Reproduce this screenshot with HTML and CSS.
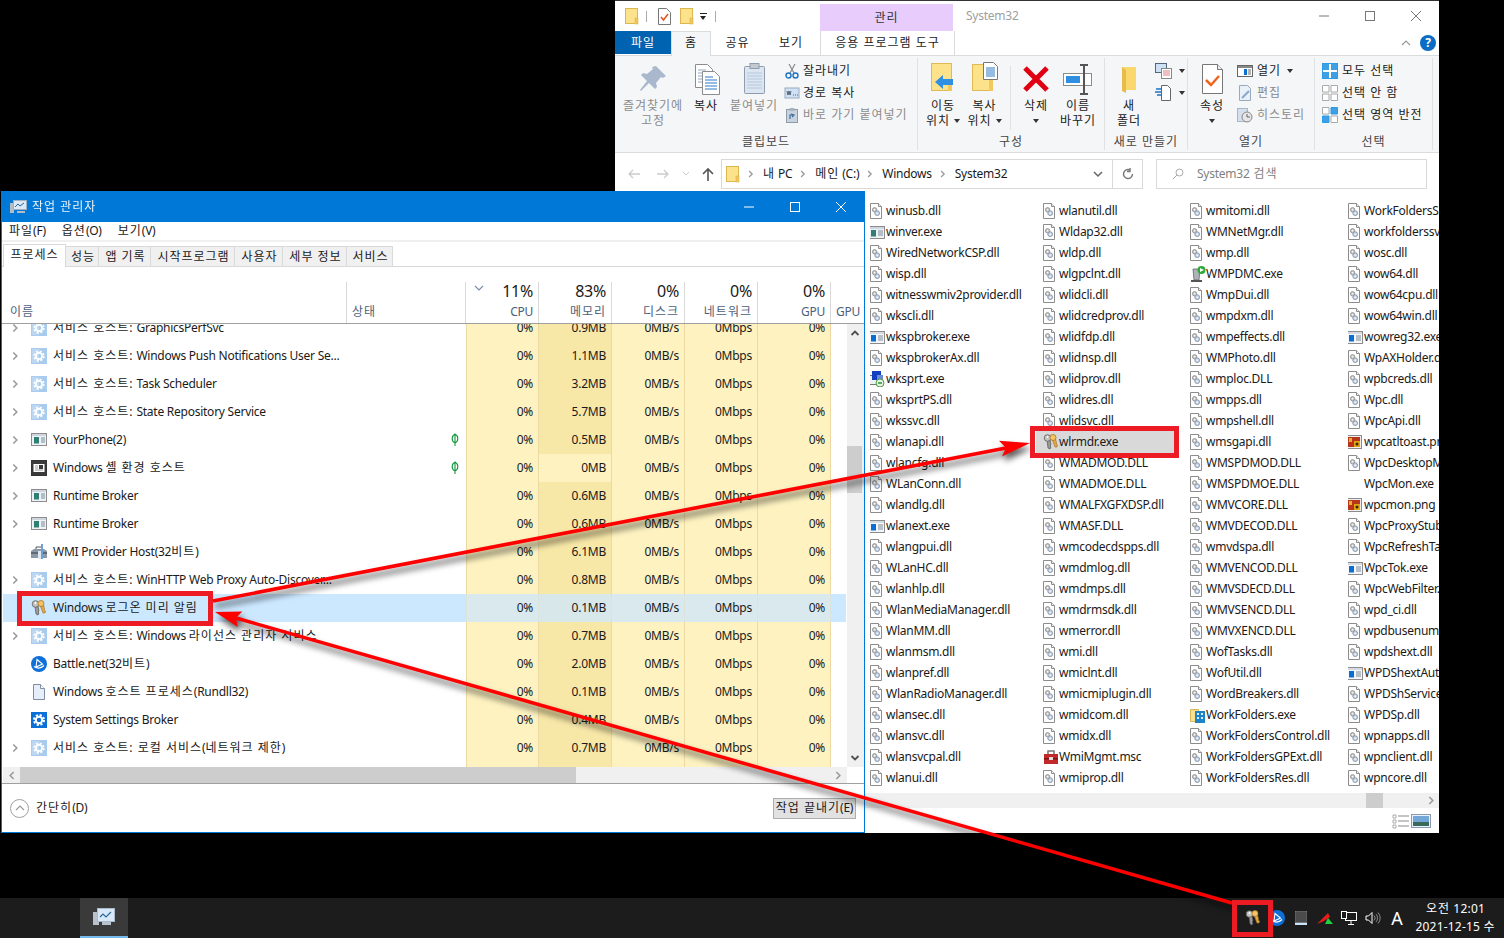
FILE: index.html
```html
<!DOCTYPE html>
<html lang="ko">
<head>
<meta charset="utf-8">
<title>작업 관리자</title>
<link rel="stylesheet" href="styles.css">
</head>
<body>
<svg class="defs" aria-hidden="true">
  <symbol id="dll" viewBox="0 0 16 16"><path d="M.5.5h8l3 3v12H.5z" fill="#fff" stroke="#8c8c8c"/><path d="M8.5.5v3h3" fill="#eee" stroke="#8c8c8c"/><circle cx="4.6" cy="6.8" r="2.2" fill="#c8c8c8" stroke="#8a8a8a" stroke-width=".8"/><circle cx="7.2" cy="10.2" r="2.4" fill="#c6d3e4" stroke="#7f8ea3" stroke-width=".8"/><circle cx="7.2" cy="10.2" r=".8" fill="#fff"/><circle cx="4.6" cy="6.8" r=".7" fill="#fff"/></symbol>
  <symbol id="win" viewBox="0 0 18 16"><rect x=".5" y="2.5" width="16" height="12" fill="#eef1f5" stroke="#8c8c8c"/><rect x="1" y="3" width="15" height="2" fill="#cfd6df"/><rect x="3" y="6" width="5" height="6.5" fill="#2f7f72"/><path d="M10 7h5M10 9h5M10 11h5" stroke="#7b8a9c"/></symbol>
  <symbol id="brk" viewBox="0 0 18 16"><rect x=".5" y="2.5" width="16" height="12" fill="#f4f6f9" stroke="#8c8c8c"/><rect x="1" y="3" width="15" height="2" fill="#d5dbe3"/><rect x="3" y="6" width="5" height="6.5" fill="#0a6fd0"/><path d="M10 7h5M10 9h5M10 11h5" stroke="#7b8a9c"/></symbol>
  <symbol id="rt" viewBox="0 0 18 16"><rect x=".5" y="4.5" width="12" height="9" fill="#eef1f5" stroke="#777"/><rect x="4" y="0" width="9" height="9" fill="#1040c0"/><rect x="9" y="4" width="6" height="5" fill="#6a8ad8"/><circle cx="12" cy="12" r="4" fill="#e8f2e4" stroke="#4f9a3f"/><path d="M10 12h4" stroke="#1f8a2f" stroke-width="1.4"/></symbol>
  <symbol id="key" viewBox="0 0 16 16"><path d="M4 6l1 8 2 1 1-2-1-1 1-1-1-5z" fill="#9a9a9a" stroke="#555" stroke-width=".7"/><circle cx="4.5" cy="4" r="3.3" fill="#c4c4c4" stroke="#5b5b5b" stroke-width=".8"/><path d="M9 5l3 8 2 0 .5-2-1.500-1 .5-1-1-4z" fill="#e6a93f" stroke="#a8752a" stroke-width=".7"/><circle cx="10" cy="3.500" r="3" fill="#f4c566" stroke="#a8752a" stroke-width=".8"/><circle cx="4.500" cy="3" r=".9" fill="#fff"/></symbol>
  <symbol id="gear" viewBox="0 0 16 16"><rect width="16" height="16" fill="#a9cbee"/><rect x="1" y="1" width="7" height="14" fill="#bcd7f2"/><circle cx="8" cy="8" r="4.800" fill="none" stroke="#fff" stroke-width="1.700" stroke-dasharray="2.100 1.670"/><circle cx="8" cy="8" r="3.100" fill="none" stroke="#fff" stroke-width="1.700"/></symbol>
  <symbol id="gearb" viewBox="0 0 16 16"><rect width="16" height="16" fill="#0a6fd6"/><circle cx="8" cy="8" r="5" fill="none" stroke="#fff" stroke-width="2" stroke-dasharray="2.200 1.730"/><circle cx="8" cy="8" r="3.200" fill="none" stroke="#fff" stroke-width="2"/></symbol>
  <symbol id="phone" viewBox="0 0 16 16"><rect x=".5" y="1.500" width="15" height="12" fill="#eef1f5" stroke="#8c8c8c"/><rect x="1" y="2" width="14" height="2" fill="#cfd6df"/><rect x="3" y="5" width="5" height="6.500" fill="#2f7f72"/><path d="M10 6h4M10 8h4M10 10h4" stroke="#7b8a9c"/></symbol>
  <symbol id="shell" viewBox="0 0 16 16"><rect x=".5" y=".5" width="15" height="15" fill="#3a3a3a" stroke="#333"/><rect x="2.500" y="4" width="11" height="8" fill="#fff"/><rect x="8" y="5" width="4" height="4" fill="#3a3a3a"/><path d="M4 6h3M4 8h3M4 10h8" stroke="#999"/></symbol>
  <symbol id="wmi" viewBox="0 0 16 16"><path d="M0 7l3-2h10l3 2v7H0z" fill="#8d98a6"/><rect x="0" y="8" width="16" height="2" fill="#5f6976"/><path d="M5 5V3h6v2" fill="none" stroke="#4c5663"/><rect x="10" y="0" width="2" height="15" fill="#6aa2d8"/><rect x="7" y="7" width="3" height="8" fill="#dfe7ef"/></symbol>
  <symbol id="bnet" viewBox="0 0 16 16"><circle cx="8" cy="8" r="8" fill="#0f6fd8"/><path d="M6 3.500l5.500 4.500-6.500 3 1 -7.500zM3 10.500c3 2 7 2 10-1" fill="none" stroke="#fff" stroke-width="1.100"/></symbol>
  <symbol id="page" viewBox="0 0 16 16"><path d="M2.500.5h7l4 4v11h-11z" fill="#e6eef9" stroke="#7f8ea3"/><path d="M9.500.5v4h4" fill="#fff" stroke="#7f8ea3"/></symbol>
  <symbol id="png" viewBox="0 0 18 16"><rect x=".5" y="1.500" width="15" height="13" fill="#eee" stroke="#8c8c8c"/><rect x="2" y="3" width="12" height="10" fill="#b8341a"/><rect x="8" y="7" width="6" height="6" fill="#e0a410"/><circle cx="11" cy="10" r="1.500" fill="#3a2400"/><rect x="3" y="4" width="3" height="4" fill="#e8b030"/></symbol>
  <symbol id="msc" viewBox="0 0 16 16"><rect x="1" y="5" width="14" height="10" fill="#c0282a"/><path d="M5 5V2h6v3" fill="none" stroke="#777" stroke-width="1.500"/><rect x="1" y="9" width="14" height="1.500" fill="#7c1416"/><rect x="6" y="8" width="4" height="3" fill="#ddd"/></symbol>
  <symbol id="wmp" viewBox="0 0 16 16"><path d="M3 3h7l-1 11H4z" fill="#aeb3b8" stroke="#666" stroke-width=".8"/><rect x="1" y="14" width="11" height="2" fill="#555"/><circle cx="11.500" cy="4" r="4" fill="#2cab3a"/><path d="M10 2l4 2-4 2z" fill="#fff"/></symbol>
  <symbol id="wf" viewBox="0 0 16 16"><path d="M.5 2.500h8v12h-8z" fill="#fbe08e" stroke="#d8b75a"/><rect x="5" y="4" width="10" height="12" fill="#1f84c6"/><path d="M7 6h2v2H7zM11 6h2v2h-2zM7 10h2v2H7zM11 10h2v2h-2z" fill="#d8eefc"/></symbol>
  <symbol id="folder" viewBox="0 0 14 17"><rect x=".5" y=".5" width="12" height="15" fill="#fde28c" stroke="#dcb64f"/><rect x="10" y="10" width="3" height="6" fill="#f0c65c" stroke="#dcb64f" stroke-width=".6"/></symbol>
  <symbol id="chev" viewBox="0 0 8 10"><path d="M1.500 1l4 4-4 4" fill="none" stroke="#9a9a9a" stroke-width="1.800"/></symbol>
  <symbol id="leaf" viewBox="0 0 10 14"><path d="M5 1C1.500 3 1 8 5 10c4-2 3.500-7 0-9zM5 2v11" fill="none" stroke="#15973f" stroke-width="1.100"/></symbol>
  <symbol id="ar" viewBox="0 0 10 10"><path d="M1.500 7l3.500-3.500L8.500 7" fill="none" stroke="#505050" stroke-width="1.800"/></symbol>
  <symbol id="gr" viewBox="0 0 16 16"><path d="M.5.5h6.500v6.500H.5zM9 .5h6.500v6.500H9zM.5 9h6.500v6.500H.5zM9 9h6.500v6.500H9z" fill="#fff" stroke="#aaa"/></symbol>
</svg>

<div class="desktop">
  <section class="explorer">
    <div class="ex-title">
      <div class="qat">
        <svg class="q1"><use href="#folder"/></svg><i class="qsep"></i>
        <svg class="q2" viewBox="0 0 13 17"><path d="M.5.5h8l4 4v12H.5z" fill="#fff" stroke="#777"/><path d="M3 9l2.500 3L10 6" fill="none" stroke="#e8501e" stroke-width="1.500"/></svg>
        <svg class="q3"><use href="#folder"/></svg>
        <span class="qdrop"></span><i class="qsep q-last"></i>
      </div>
      <div class="ctx k">관리</div>
      <div class="wtitle">System32</div>
      <div class="ctl"><span><svg viewBox="0 0 10 10"><path d="M0 5h10" stroke="#777"/></svg></span><span><svg viewBox="0 0 10 10"><rect x=".5" y=".5" width="9" height="9" fill="none" stroke="#777"/></svg></span><span><svg viewBox="0 0 10 10"><path d="M0 0l10 10M10 0L0 10" stroke="#777"/></svg></span></div>
    </div>
    <div class="ex-tabs k">
      <div class="t-file">파일</div>
      <div class="t-home">홈</div>
      <div class="t-a">공유</div>
      <div class="t-b">보기</div>
      <div class="t-tool">응용 프로그램 도구</div>
      <div class="t-right">
        <svg class="collapse" viewBox="0 0 10 6"><path d="M1 5l4-4 4 4" fill="none" stroke="#999" stroke-width="1.200"/></svg>
        <span class="help">?</span>
      </div>
    </div>
    <div class="ribbon k">
      <div class="grp g-clip">
        <div class="gb">
          <div class="big w60 off"><svg class="bi" viewBox="0 0 34 34"><path d="M20 4l10 10-3 2-2-1-5 6 1 4-2 2-6-6-8 8-1-1 7-9-6-6 2-2 4 1 6-5-1-2z" fill="#a9b8cc"/></svg><span>즐겨찾기에<br>고정</span></div>
          <div class="big w46"><svg class="bi" viewBox="0 0 34 34"><path d="M6.500 2.500h12l5 5v18h-17z" fill="#fff" stroke="#8c8c8c"/><path d="M9 8h8M9 11h12M9 14h12M9 17h12M9 20h12" stroke="#8fa8c8"/><path d="M13.500 9.500h12l5 5v18h-17z" fill="#fff" stroke="#8c8c8c"/><path d="M16 15h8M16 18h12M16 21h12M16 24h12M16 27h12" stroke="#2f78c8"/></svg><span>복사</span></div>
          <div class="big w50 off"><svg class="bi" viewBox="0 0 34 34"><rect x="7.500" y="4.500" width="20" height="27" rx="1" fill="#dce6f2" stroke="#8f9cab"/><rect x="13" y="1.500" width="9" height="5" fill="#c3c9d0" stroke="#8f9cab"/><path d="M10 11h15M10 14h15M10 17h15M10 20h15M10 23h15M10 26h15" stroke="#b4c6dc"/></svg><span>붙여넣기</span></div>
          <div class="small-col">
            <div class="sm"><svg class="s14" viewBox="0 0 14 16"><path d="M4 1l5 9M10 1L5 10" stroke="#888" stroke-width="1.200"/><circle cx="3.500" cy="12.500" r="2.500" fill="none" stroke="#1c72c4" stroke-width="1.400"/><circle cx="10.500" cy="12.500" r="2.500" fill="none" stroke="#1c72c4" stroke-width="1.400"/></svg>잘라내기</div>
            <div class="sm"><svg class="s14" viewBox="0 0 14 16"><rect y="3" width="14" height="10" fill="#cfe2f5" stroke="#9ab"/><path d="M2 6l1 4 1-4 1 4 1-4M8 10h1M10 10h1M12 10h1" stroke="#345" stroke-width=".8" fill="none"/></svg>경로 복사</div>
            <div class="sm off"><svg class="s14" viewBox="0 0 14 16"><rect x="1.500" y="2.500" width="11" height="13" fill="#c9d3df" stroke="#8f9cab"/><rect x="4.500" y="1" width="5" height="3" fill="#aab3bd"/><path d="M5 12V8h4M6 7l3 1-2 2" fill="none" stroke="#3f6c99" stroke-width="1.200"/></svg>바로 가기 붙여넣기</div>
          </div>
        </div>
        <div class="gl">클립보드</div>
      </div>
      <div class="grp g-org">
        <div class="gb">
          <div class="big w44"><svg class="bi" viewBox="0 0 34 34"><rect x="5.500" y="1.500" width="20" height="27" fill="#fde28c" stroke="#e0bb55"/><rect x="22" y="18" width="4" height="11" fill="#f2c95f"/><path d="M9 20l8-7v4h10v6H17v4z" fill="#2f8fe0"/></svg><span>이동<br>위치 <b class="dc"></b></span></div>
          <div class="big w39"><svg class="bi" viewBox="0 0 34 34"><rect x="4.500" y="2.500" width="20" height="26" fill="#fde28c" stroke="#e0bb55"/><rect x="21" y="18" width="4" height="11" fill="#f2c95f"/><path d="M15.500.5h10l4 4v13h-14z" fill="#fff" stroke="#777"/><path d="M18 6h9M18 8h9M18 10h9M18 12h9M18 14h9" stroke="#2f78c8"/></svg><span>복사<br>위치 <b class="dc"></b></span></div>
          <i class="vsep"></i>
          <div class="big w42"><svg class="bi" viewBox="0 0 34 34"><path d="M6 6l22 22M28 6L6 28" stroke="#e00012" stroke-width="5"/></svg><span>삭제<br><b class="dc"></b></span></div>
          <div class="big w42"><svg class="bi" viewBox="0 0 34 34"><rect x="2.500" y="11.500" width="28" height="12" fill="#fff" stroke="#8c8c8c"/><rect x="5" y="14" width="14" height="7" fill="#2f8fe0"/><path d="M19 3h8M19 32h8M23 3v29" stroke="#555" stroke-width="2"/></svg><span>이름<br>바꾸기</span></div>
        </div>
        <div class="gl">구성</div>
      </div>
      <div class="grp g-new">
        <div class="gb">
          <div class="big w44"><svg class="bi" viewBox="0 0 34 34"><path d="M10 5h14v23H13z" fill="#fbd86e"/><path d="M10 5v24l4 2V8z" fill="#e8bc4a"/></svg><span>새<br>폴더</span></div>
          <div class="small-col sc2">
            <div class="sm"><svg class="s20" viewBox="0 0 20 16"><rect x=".5" y=".5" width="11" height="9" fill="#cfe2f5" stroke="#567"/><rect x="6.500" y="5.500" width="10" height="10" fill="#fff" stroke="#888"/><path d="M8 8h7M8 10h7M8 12h7" stroke="#e08080"/></svg><b class="dc"></b></div>
            <div class="sm"><svg class="s20" viewBox="0 0 20 16"><path d="M6.500.5h6l3 3v12h-9z" fill="#fff" stroke="#666"/><path d="M1 4h6M0 7h6M2 10h5" stroke="#1c72c4" stroke-width="1.300"/></svg><b class="dc"></b></div>
          </div>
        </div>
        <div class="gl">새로 만들기</div>
      </div>
      <div class="grp g-open">
        <div class="gb">
          <div class="big w40"><svg class="bi" viewBox="0 0 34 34"><path d="M7.500 2.500h15l5 5v24h-20z" fill="#fff" stroke="#777"/><path d="M22.500 2.500v5h5" fill="#eee" stroke="#777"/><path d="M11 18l5 5 8-9" fill="none" stroke="#f2641e" stroke-width="2.500"/></svg><span>속성<br><b class="dc"></b></span></div>
          <div class="small-col sc3">
            <div class="sm"><svg class="s16" viewBox="0 0 16 16"><rect x=".5" y="2.500" width="15" height="11" fill="#fff" stroke="#666"/><rect x="1" y="3" width="14" height="2" fill="#888"/><rect x="7" y="6" width="3" height="6" fill="#0a6fd0"/><path d="M11 7h3M11 9h3M11 11h3" stroke="#666"/></svg>열기 <b class="dc dcs"></b></div>
            <div class="sm off"><svg class="s16" viewBox="0 0 16 16"><path d="M2.500.5h8l3 3v12h-11z" fill="#e8f0f9" stroke="#9aa9bb"/><path d="M5 13l7-7" stroke="#88a8cc" stroke-width="2"/></svg>편집</div>
            <div class="sm off"><svg class="s16" viewBox="0 0 16 16"><rect x=".5" y="1.500" width="10" height="13" fill="#d5e0ee" stroke="#a9b6c6"/><circle cx="10" cy="10" r="5" fill="#e6e6e6" stroke="#888"/><path d="M10 7v3h3" stroke="#666" fill="none"/></svg>히스토리</div>
          </div>
        </div>
        <div class="gl">열기</div>
      </div>
      <div class="grp g-sel">
        <div class="gb">
          <div class="small-col sc4">
            <div class="sm"><svg class="s16" viewBox="0 0 16 16"><rect x=".5" y=".5" width="15" height="15" fill="#fff" stroke="#2d9be8"/><path d="M1 1h6v6H1zM9 1h6v6H9zM1 9h6v6H1zM9 9h6v6H9z" fill="#3f9fe4"/></svg>모두 선택</div>
            <div class="sm"><svg class="s16"><use href="#gr"/></svg>선택 안 함</div>
            <div class="sm"><svg class="s16" viewBox="0 0 16 16"><path d="M.5 9h6.500v6.500H.5zM9 .5h6.500v6.500H9z" fill="#3f9fe4" stroke="#2d9be8"/><path d="M.5.5h6.500v6.500H.5zM9 9h6.500v6.500H9z" fill="#fff" stroke="#aaa"/></svg>선택 영역 반전</div>
          </div>
        </div>
        <div class="gl">선택</div>
      </div>
    </div>
    <div class="addr">
      <div class="nav">
        <svg class="n1" viewBox="0 0 12 10"><path d="M12 5H1M5 1L1 5l4 4" fill="none" stroke="#ccc" stroke-width="1.300"/></svg>
        <svg class="n2" viewBox="0 0 12 10"><path d="M0 5h11M7 1l4 4-4 4" fill="none" stroke="#ccc" stroke-width="1.300"/></svg>
        <svg class="n3" viewBox="0 0 8 6"><path d="M1 1l3 3 3-3" fill="none" stroke="#ccc"/></svg>
        <svg class="n4" viewBox="0 0 12 14"><path d="M6 14V2M1 7l5-5 5 5" fill="none" stroke="#555" stroke-width="1.600"/></svg>
      </div>
      <div class="crumb">
        <svg class="c-f"><use href="#folder"/></svg>
        <svg class="c-c"><use href="#chev"/></svg><span class="c1"><span class="k">내</span> PC</span>
        <svg class="c-c"><use href="#chev"/></svg><span class="c2"><span class="k">메인</span> (C:)</span>
        <svg class="c-c"><use href="#chev"/></svg><span class="c3">Windows</span>
        <svg class="c-c"><use href="#chev"/></svg><span class="c4">System32</span>
        <svg class="c-dd" viewBox="0 0 10 6"><path d="M1 1l4 4 4-4" fill="none" stroke="#666" stroke-width="1.500"/></svg>
      </div>
      <div class="refresh"><svg viewBox="0 0 12 12"><path d="M10.500 6A4.500 4.500 0 1 1 8 2M8 0v3.500h-3" fill="none" stroke="#777" stroke-width="1.400"/></svg></div>
      <div class="search"><svg viewBox="0 0 12 12"><circle cx="7.500" cy="4.500" r="3.500" fill="none" stroke="#aaa"/><path d="M5 7L1 11" stroke="#aaa"/></svg>System32 <span class="k">검색</span></div>
    </div>
    <div class="files">
      <div class="f"><svg class="fi"><use href="#dll"/></svg>winusb.dll</div>
      <div class="f"><svg class="fw"><use href="#win"/></svg>winver.exe</div>
      <div class="f"><svg class="fi"><use href="#dll"/></svg>WiredNetworkCSP.dll</div>
      <div class="f"><svg class="fi"><use href="#dll"/></svg>wisp.dll</div>
      <div class="f"><svg class="fi"><use href="#dll"/></svg>witnesswmiv2provider.dll</div>
      <div class="f"><svg class="fi"><use href="#dll"/></svg>wkscli.dll</div>
      <div class="f"><svg class="fw"><use href="#brk"/></svg>wkspbroker.exe</div>
      <div class="f"><svg class="fi"><use href="#dll"/></svg>wkspbrokerAx.dll</div>
      <div class="f"><svg class="fw"><use href="#rt"/></svg>wksprt.exe</div>
      <div class="f"><svg class="fi"><use href="#dll"/></svg>wksprtPS.dll</div>
      <div class="f"><svg class="fi"><use href="#dll"/></svg>wkssvc.dll</div>
      <div class="f"><svg class="fi"><use href="#dll"/></svg>wlanapi.dll</div>
      <div class="f"><svg class="fi"><use href="#dll"/></svg>wlancfg.dll</div>
      <div class="f"><svg class="fi"><use href="#dll"/></svg>WLanConn.dll</div>
      <div class="f"><svg class="fi"><use href="#dll"/></svg>wlandlg.dll</div>
      <div class="f"><svg class="fw"><use href="#brk"/></svg>wlanext.exe</div>
      <div class="f"><svg class="fi"><use href="#dll"/></svg>wlangpui.dll</div>
      <div class="f"><svg class="fi"><use href="#dll"/></svg>WLanHC.dll</div>
      <div class="f"><svg class="fi"><use href="#dll"/></svg>wlanhlp.dll</div>
      <div class="f"><svg class="fi"><use href="#dll"/></svg>WlanMediaManager.dll</div>
      <div class="f"><svg class="fi"><use href="#dll"/></svg>WlanMM.dll</div>
      <div class="f"><svg class="fi"><use href="#dll"/></svg>wlanmsm.dll</div>
      <div class="f"><svg class="fi"><use href="#dll"/></svg>wlanpref.dll</div>
      <div class="f"><svg class="fi"><use href="#dll"/></svg>WlanRadioManager.dll</div>
      <div class="f"><svg class="fi"><use href="#dll"/></svg>wlansec.dll</div>
      <div class="f"><svg class="fi"><use href="#dll"/></svg>wlansvc.dll</div>
      <div class="f"><svg class="fi"><use href="#dll"/></svg>wlansvcpal.dll</div>
      <div class="f"><svg class="fi"><use href="#dll"/></svg>wlanui.dll</div>

      <div class="f"><svg class="fi"><use href="#dll"/></svg>wlanutil.dll</div>
      <div class="f"><svg class="fi"><use href="#dll"/></svg>Wldap32.dll</div>
      <div class="f"><svg class="fi"><use href="#dll"/></svg>wldp.dll</div>
      <div class="f"><svg class="fi"><use href="#dll"/></svg>wlgpclnt.dll</div>
      <div class="f"><svg class="fi"><use href="#dll"/></svg>wlidcli.dll</div>
      <div class="f"><svg class="fi"><use href="#dll"/></svg>wlidcredprov.dll</div>
      <div class="f"><svg class="fi"><use href="#dll"/></svg>wlidfdp.dll</div>
      <div class="f"><svg class="fi"><use href="#dll"/></svg>wlidnsp.dll</div>
      <div class="f"><svg class="fi"><use href="#dll"/></svg>wlidprov.dll</div>
      <div class="f"><svg class="fi"><use href="#dll"/></svg>wlidres.dll</div>
      <div class="f"><svg class="fi"><use href="#dll"/></svg>wlidsvc.dll</div>
      <div class="f fsel"><svg class="fi"><use href="#key"/></svg>wlrmdr.exe</div>
      <div class="f"><svg class="fi"><use href="#dll"/></svg>WMADMOD.DLL</div>
      <div class="f"><svg class="fi"><use href="#dll"/></svg>WMADMOE.DLL</div>
      <div class="f"><svg class="fi"><use href="#dll"/></svg>WMALFXGFXDSP.dll</div>
      <div class="f"><svg class="fi"><use href="#dll"/></svg>WMASF.DLL</div>
      <div class="f"><svg class="fi"><use href="#dll"/></svg>wmcodecdspps.dll</div>
      <div class="f"><svg class="fi"><use href="#dll"/></svg>wmdmlog.dll</div>
      <div class="f"><svg class="fi"><use href="#dll"/></svg>wmdmps.dll</div>
      <div class="f"><svg class="fi"><use href="#dll"/></svg>wmdrmsdk.dll</div>
      <div class="f"><svg class="fi"><use href="#dll"/></svg>wmerror.dll</div>
      <div class="f"><svg class="fi"><use href="#dll"/></svg>wmi.dll</div>
      <div class="f"><svg class="fi"><use href="#dll"/></svg>wmiclnt.dll</div>
      <div class="f"><svg class="fi"><use href="#dll"/></svg>wmicmiplugin.dll</div>
      <div class="f"><svg class="fi"><use href="#dll"/></svg>wmidcom.dll</div>
      <div class="f"><svg class="fi"><use href="#dll"/></svg>wmidx.dll</div>
      <div class="f"><svg class="fi"><use href="#msc"/></svg>WmiMgmt.msc</div>
      <div class="f"><svg class="fi"><use href="#dll"/></svg>wmiprop.dll</div>

      <div class="f"><svg class="fi"><use href="#dll"/></svg>wmitomi.dll</div>
      <div class="f"><svg class="fi"><use href="#dll"/></svg>WMNetMgr.dll</div>
      <div class="f"><svg class="fi"><use href="#dll"/></svg>wmp.dll</div>
      <div class="f"><svg class="fi"><use href="#wmp"/></svg>WMPDMC.exe</div>
      <div class="f"><svg class="fi"><use href="#dll"/></svg>WmpDui.dll</div>
      <div class="f"><svg class="fi"><use href="#dll"/></svg>wmpdxm.dll</div>
      <div class="f"><svg class="fi"><use href="#dll"/></svg>wmpeffects.dll</div>
      <div class="f"><svg class="fi"><use href="#dll"/></svg>WMPhoto.dll</div>
      <div class="f"><svg class="fi"><use href="#dll"/></svg>wmploc.DLL</div>
      <div class="f"><svg class="fi"><use href="#dll"/></svg>wmpps.dll</div>
      <div class="f"><svg class="fi"><use href="#dll"/></svg>wmpshell.dll</div>
      <div class="f"><svg class="fi"><use href="#dll"/></svg>wmsgapi.dll</div>
      <div class="f"><svg class="fi"><use href="#dll"/></svg>WMSPDMOD.DLL</div>
      <div class="f"><svg class="fi"><use href="#dll"/></svg>WMSPDMOE.DLL</div>
      <div class="f"><svg class="fi"><use href="#dll"/></svg>WMVCORE.DLL</div>
      <div class="f"><svg class="fi"><use href="#dll"/></svg>WMVDECOD.DLL</div>
      <div class="f"><svg class="fi"><use href="#dll"/></svg>wmvdspa.dll</div>
      <div class="f"><svg class="fi"><use href="#dll"/></svg>WMVENCOD.DLL</div>
      <div class="f"><svg class="fi"><use href="#dll"/></svg>WMVSDECD.DLL</div>
      <div class="f"><svg class="fi"><use href="#dll"/></svg>WMVSENCD.DLL</div>
      <div class="f"><svg class="fi"><use href="#dll"/></svg>WMVXENCD.DLL</div>
      <div class="f"><svg class="fi"><use href="#dll"/></svg>WofTasks.dll</div>
      <div class="f"><svg class="fi"><use href="#dll"/></svg>WofUtil.dll</div>
      <div class="f"><svg class="fi"><use href="#dll"/></svg>WordBreakers.dll</div>
      <div class="f"><svg class="fi"><use href="#wf"/></svg>WorkFolders.exe</div>
      <div class="f"><svg class="fi"><use href="#dll"/></svg>WorkFoldersControl.dll</div>
      <div class="f"><svg class="fi"><use href="#dll"/></svg>WorkFoldersGPExt.dll</div>
      <div class="f"><svg class="fi"><use href="#dll"/></svg>WorkFoldersRes.dll</div>

      <div class="f"><svg class="fi"><use href="#dll"/></svg>WorkFoldersShell.dll</div>
      <div class="f"><svg class="fi"><use href="#dll"/></svg>workfolderssvc.dll</div>
      <div class="f"><svg class="fi"><use href="#dll"/></svg>wosc.dll</div>
      <div class="f"><svg class="fi"><use href="#dll"/></svg>wow64.dll</div>
      <div class="f"><svg class="fi"><use href="#dll"/></svg>wow64cpu.dll</div>
      <div class="f"><svg class="fi"><use href="#dll"/></svg>wow64win.dll</div>
      <div class="f"><svg class="fw"><use href="#brk"/></svg>wowreg32.exe</div>
      <div class="f"><svg class="fi"><use href="#dll"/></svg>WpAXHolder.dll</div>
      <div class="f"><svg class="fi"><use href="#dll"/></svg>wpbcreds.dll</div>
      <div class="f"><svg class="fi"><use href="#dll"/></svg>Wpc.dll</div>
      <div class="f"><svg class="fi"><use href="#dll"/></svg>WpcApi.dll</div>
      <div class="f"><svg class="fw"><use href="#png"/></svg>wpcatltoast.png</div>
      <div class="f"><svg class="fi"><use href="#dll"/></svg>WpcDesktopMonSvc.dll</div>
      <div class="f"><span class="fe"></span>WpcMon.exe</div>
      <div class="f"><svg class="fw"><use href="#png"/></svg>wpcmon.png</div>
      <div class="f"><svg class="fi"><use href="#dll"/></svg>WpcProxyStubs.dll</div>
      <div class="f"><svg class="fi"><use href="#dll"/></svg>WpcRefreshTask.dll</div>
      <div class="f"><svg class="fw"><use href="#brk"/></svg>WpcTok.exe</div>
      <div class="f"><svg class="fi"><use href="#dll"/></svg>WpcWebFilter.dll</div>
      <div class="f"><svg class="fi"><use href="#dll"/></svg>wpd_ci.dll</div>
      <div class="f"><svg class="fi"><use href="#dll"/></svg>wpdbusenum.dll</div>
      <div class="f"><svg class="fi"><use href="#dll"/></svg>wpdshext.dll</div>
      <div class="f"><svg class="fw"><use href="#brk"/></svg>WPDShextAutoplay.exe</div>
      <div class="f"><svg class="fi"><use href="#dll"/></svg>WPDShServiceObj.dll</div>
      <div class="f"><svg class="fi"><use href="#dll"/></svg>WPDSp.dll</div>
      <div class="f"><svg class="fi"><use href="#dll"/></svg>wpnapps.dll</div>
      <div class="f"><svg class="fi"><use href="#dll"/></svg>wpnclient.dll</div>
      <div class="f"><svg class="fi"><use href="#dll"/></svg>wpncore.dll</div>
    </div>
    <div class="ex-hs"><span class="ex-thumb"></span><svg class="ex-hsr"><use href="#chev"/></svg></div>
    <div class="ex-status">
      <svg class="st1" viewBox="0 0 18 14"><path d="M1 1h3v3H1zM1 6h3v3H1zM1 11h3v3H1z" fill="none" stroke="#999" stroke-width=".8"/><path d="M6 2h11M6 7h11M6 12h11" stroke="#8a8a8a"/></svg>
      <svg class="st2" viewBox="0 0 20 14"><rect x=".5" y=".5" width="19" height="13" fill="#e9f1fa" stroke="#8c9bb0"/><rect x="2" y="2" width="16" height="7" fill="#74a6d8"/><rect x="2" y="8" width="16" height="4" fill="#3a6a5a"/></svg>
    </div>
  </section>

  <section class="taskmgr">
    <div class="tm-title">
      <svg class="tm-ic" viewBox="0 0 17 14"><rect x="0" y="3" width="4" height="10" fill="#b5bcc4"/><rect x="3.500" y=".5" width="13" height="9" fill="#dbe8f5" stroke="#9fb0c2"/><path d="M5 7l3-3 2 2 4-3" fill="none" stroke="#2a6a9a"/><rect x="7" y="11" width="8" height="2" fill="#b5bcc4"/></svg>
      <span class="tm-name k">작업 관리자</span>
      <div class="ctl ctl-w"><span><svg viewBox="0 0 10 10"><path d="M0 5h10" stroke="#fff"/></svg></span><span><svg viewBox="0 0 10 10"><rect x=".5" y=".5" width="9" height="9" fill="none" stroke="#fff"/></svg></span><span><svg viewBox="0 0 10 10"><path d="M0 0l10 10M10 0L0 10" stroke="#fff"/></svg></span></div>
    </div>
    <div class="tm-menu"><span><span class="k">파일</span>(F)</span><span><span class="k">옵션</span>(O)</span><span><span class="k">보기</span>(V)</span></div>
    <div class="tm-tabs k">
      <div class="tab active w63">프로세스</div><div class="tab w33">성능</div><div class="tab w52">앱 기록</div><div class="tab w84">시작프로그램</div><div class="tab w48">사용자</div><div class="tab w64">세부 정보</div><div class="tab w46">서비스</div>
    </div>
    <div class="head">
      <div class="hc hname k">이름</div>
      <div class="hc hstat k">상태</div>
      <div class="hc"><svg class="sort" viewBox="0 0 10 6"><path d="M1 1l4 4 4-4" fill="none" stroke="#7a8ea8" stroke-width="1.200"/></svg><b>11%</b><em>CPU</em></div>
      <div class="hc"><b>83%</b><em class="k">메모리</em></div>
      <div class="hc"><b>0%</b><em class="k">디스크</em></div>
      <div class="hc"><b>0%</b><em class="k">네트워크</em></div>
      <div class="hc"><b>0%</b><em>GPU</em></div>
      <div class="hc hlast"><em>GPU</em></div>
    </div>
    <div class="body">
      <div class="list"><div class="rows">
        <div class="row"><div class="nm"><svg class="ex"><use href="#chev"/></svg><svg class="ic"><use href="#gear"/></svg><span><span class="k">서비스 호스트:</span> GraphicsPerfSvc</span></div><div class="st"></div><div class="v">0%</div><div class="v m">0.9MB</div><div class="v">0MB/s</div><div class="v">0Mbps</div><div class="v">0%</div></div>
        <div class="row"><div class="nm"><svg class="ex"><use href="#chev"/></svg><svg class="ic"><use href="#gear"/></svg><span><span class="k">서비스 호스트:</span> Windows Push Notifications User Se...</span></div><div class="st"></div><div class="v">0%</div><div class="v m">1.1MB</div><div class="v">0MB/s</div><div class="v">0Mbps</div><div class="v">0%</div></div>
        <div class="row"><div class="nm"><svg class="ex"><use href="#chev"/></svg><svg class="ic"><use href="#gear"/></svg><span><span class="k">서비스 호스트:</span> Task Scheduler</span></div><div class="st"></div><div class="v">0%</div><div class="v m">3.2MB</div><div class="v">0MB/s</div><div class="v">0Mbps</div><div class="v">0%</div></div>
        <div class="row"><div class="nm"><svg class="ex"><use href="#chev"/></svg><svg class="ic"><use href="#gear"/></svg><span><span class="k">서비스 호스트:</span> State Repository Service</span></div><div class="st"></div><div class="v">0%</div><div class="v m">5.7MB</div><div class="v">0MB/s</div><div class="v">0Mbps</div><div class="v">0%</div></div>
        <div class="row"><div class="nm"><svg class="ex"><use href="#chev"/></svg><svg class="ic"><use href="#phone"/></svg><span>YourPhone(2)</span></div><div class="st"><svg class="leaf"><use href="#leaf"/></svg></div><div class="v">0%</div><div class="v m">0.5MB</div><div class="v">0MB/s</div><div class="v">0Mbps</div><div class="v">0%</div></div>
        <div class="row"><div class="nm"><svg class="ex"><use href="#chev"/></svg><svg class="ic"><use href="#shell"/></svg><span>Windows <span class="k">셸 환경 호스트</span></span></div><div class="st"><svg class="leaf"><use href="#leaf"/></svg></div><div class="v">0%</div><div class="v z">0MB</div><div class="v">0MB/s</div><div class="v">0Mbps</div><div class="v">0%</div></div>
        <div class="row"><div class="nm"><svg class="ex"><use href="#chev"/></svg><svg class="ic"><use href="#phone"/></svg><span>Runtime Broker</span></div><div class="st"></div><div class="v">0%</div><div class="v m">0.6MB</div><div class="v">0MB/s</div><div class="v">0Mbps</div><div class="v">0%</div></div>
        <div class="row"><div class="nm"><svg class="ex"><use href="#chev"/></svg><svg class="ic"><use href="#phone"/></svg><span>Runtime Broker</span></div><div class="st"></div><div class="v">0%</div><div class="v m">0.6MB</div><div class="v">0MB/s</div><div class="v">0Mbps</div><div class="v">0%</div></div>
        <div class="row"><div class="nm"><span class="ex"></span><svg class="ic"><use href="#wmi"/></svg><span>WMI Provider Host(32<span class="k">비트</span>)</span></div><div class="st"></div><div class="v">0%</div><div class="v m">6.1MB</div><div class="v">0MB/s</div><div class="v">0Mbps</div><div class="v">0%</div></div>
        <div class="row"><div class="nm"><svg class="ex"><use href="#chev"/></svg><svg class="ic"><use href="#gear"/></svg><span><span class="k">서비스 호스트:</span> WinHTTP Web Proxy Auto-Discover...</span></div><div class="st"></div><div class="v">0%</div><div class="v m">0.8MB</div><div class="v">0MB/s</div><div class="v">0Mbps</div><div class="v">0%</div></div>
        <div class="row sel"><div class="nm"><span class="ex"></span><svg class="ic"><use href="#key"/></svg><span>Windows <span class="k">로그온 미리 알림</span></span></div><div class="st"></div><div class="v">0%</div><div class="v m">0.1MB</div><div class="v">0MB/s</div><div class="v">0Mbps</div><div class="v">0%</div></div>
        <div class="row"><div class="nm"><svg class="ex"><use href="#chev"/></svg><svg class="ic"><use href="#gear"/></svg><span><span class="k">서비스 호스트:</span> Windows <span class="k">라이선스 관리자 서비스</span></span></div><div class="st"></div><div class="v">0%</div><div class="v m">0.7MB</div><div class="v">0MB/s</div><div class="v">0Mbps</div><div class="v">0%</div></div>
        <div class="row"><div class="nm"><span class="ex"></span><svg class="ic"><use href="#bnet"/></svg><span>Battle.net(32<span class="k">비트</span>)</span></div><div class="st"></div><div class="v">0%</div><div class="v m">2.0MB</div><div class="v">0MB/s</div><div class="v">0Mbps</div><div class="v">0%</div></div>
        <div class="row"><div class="nm"><span class="ex"></span><svg class="ic"><use href="#page"/></svg><span>Windows <span class="k">호스트 프로세스</span>(Rundll32)</span></div><div class="st"></div><div class="v">0%</div><div class="v m">0.1MB</div><div class="v">0MB/s</div><div class="v">0Mbps</div><div class="v">0%</div></div>
        <div class="row"><div class="nm"><span class="ex"></span><svg class="ic"><use href="#gearb"/></svg><span>System Settings Broker</span></div><div class="st"></div><div class="v">0%</div><div class="v m">0.4MB</div><div class="v">0MB/s</div><div class="v">0Mbps</div><div class="v">0%</div></div>
        <div class="row"><div class="nm"><svg class="ex"><use href="#chev"/></svg><svg class="ic"><use href="#gear"/></svg><span><span class="k">서비스 호스트: 로컬 서비스</span>(<span class="k">네트워크 제한</span>)</span></div><div class="st"></div><div class="v">0%</div><div class="v m">0.7MB</div><div class="v">0MB/s</div><div class="v">0Mbps</div><div class="v">0%</div></div>
        <div class="row"><div class="nm"></div><div class="st"></div><div class="v"></div><div class="v m"></div><div class="v"></div><div class="v"></div><div class="v"></div></div>
      </div></div>
      <div class="vs"><svg class="vu"><use href="#ar"/></svg><span class="vth"></span><svg class="vd"><use href="#ar"/></svg></div>
    </div>
    <div class="hbar"><div class="hbl"><svg><use href="#chev"/></svg></div><span class="hth"></span><div class="hbr"><svg><use href="#chev"/></svg></div></div>
    <div class="foot">
      <span class="circ"><svg viewBox="0 0 10 6"><path d="M1 5l4-4 4 4" fill="none" stroke="#999" stroke-width="1.100"/></svg></span>
      <span class="less"><span class="k">간단히</span>(D)</span>
      <span class="end"><span class="k">작업 끝내기</span>(E)</span>
    </div>
  </section>

  <svg class="arrows" viewBox="0 0 1504 938" aria-hidden="true">
    <path d="M213 601L1006 448" stroke="#f00" stroke-width="3.500"/>
    <path d="M1030 443L999 440.800 1006 448 1002 456.600z" fill="#f00"/>
    <path d="M1232 903L236 618" stroke="#f00" stroke-width="3.500"/>
    <path d="M215 612L242.200 611.500 236 618 237.800 626.900z" fill="#f00"/>
  </svg>
  <i class="mark mk-a"></i>
  <i class="mark mk-b"></i>
  <i class="mark mk-c"></i>
</div>

<footer class="taskbar">
  <div class="tb-app"><svg viewBox="0 0 22 20"><rect y="5" width="6" height="13" fill="#b9c2cc"/><rect x="4.500" y="1.500" width="17" height="13" fill="#d9e8f6" stroke="#a8bacb"/><path d="M7 10l3-3 3 3 5-5" fill="none" stroke="#2a6a9a" stroke-width="1.200"/><rect x="9" y="15" width="9" height="3" fill="#b9c2cc"/></svg></div>
  <div class="tray">
    <span class="ts"><svg viewBox="0 0 16 16"><use href="#key"/></svg></span>
    <span class="ts"><svg viewBox="0 0 16 16"><use href="#bnet"/></svg></span>
    <span class="ts"><svg viewBox="0 0 16 16"><rect x="2" y="1" width="12" height="13" fill="#777"/><path d="M2 3h12M2 5h12M2 7h12M2 9h12M2 11h12M4 1v11M6 1v11M8 1v11M10 1v11M12 1v11" stroke="#222" stroke-width=".6"/><rect x="2" y="13" width="12" height="2" fill="#cce4f7"/></svg></span>
    <span class="ts"><svg viewBox="0 0 16 16"><path d="M0 14L11 3l2 4-6 4z" fill="#e81c1c"/><path d="M8 14l3-6 5 6z" fill="#1fd23c"/></svg></span>
    <span class="ts"><svg viewBox="0 0 16 16"><rect x="4.500" y="2.500" width="11" height="8" fill="none" stroke="#fff"/><rect x=".5" y="1.500" width="5" height="7" fill="#1c1c1c" stroke="#fff"/><path d="M10 11v3M7 14.500h6" stroke="#fff"/></svg></span>
    <span class="ts"><svg viewBox="0 0 16 16"><path d="M1 6h2.500L7 2.500v11L3.500 10H1z" fill="none" stroke="#fff"/><path d="M9 5.500a3.500 3.500 0 0 1 0 5M11 4a6 6 0 0 1 0 8M13 2.500a8 8 0 0 1 0 11" fill="none" stroke="#888"/></svg></span>
    <span class="ts ime">A</span>
    <div class="clock"><span><span class="k">오전</span> 12:01</span><span>2021-12-15 <span class="k">수</span></span></div>
  </div>
</footer>
</body>
</html>
```

FILE: styles.css
```css
* { box-sizing: border-box; }
html, body { margin: 0; padding: 0; }
body {
  width: 1504px; height: 938px; overflow: hidden; background: #000;
  font: 12px/1.2 "Noto Sans", "Noto Sans CJK KR", sans-serif; color: #1a1a1a;
  letter-spacing: -.25px;
  display: flex; flex-direction: column;
}
svg { display: block; flex: none; overflow: visible; }
.defs { display: none; }
.k { letter-spacing: 1px; }
.off { color: #8b8b8b; }

.desktop { position: relative; height: 898px; flex: none; }

/* explorer */
.explorer {
  position: absolute; left: 615px; top: 0; width: 824px; height: 833px;
  background: #fff; border-top: 1px solid #333; display: flex; flex-direction: column; overflow: hidden;
}
.ex-title { height: 30px; display: flex; flex: none; }
.qat { width: 205px; display: flex; align-items: center; padding-left: 10px; }
.q1, .q3 { width: 14px; height: 17px; }
.q2 { width: 13px; height: 17px; margin: 0 9px 0 11px; }
.qsep { width: 1px; height: 11px; background: #aaa; margin-left: 7px; }
.qdrop { width: 7px; height: 7px; margin-left: 6px; border-top: 1px solid #222; position: relative; }
.qdrop::after { content: ""; position: absolute; left: 0; top: 2px; border: 3.5px solid transparent; border-top: 4px solid #222; }
.q-last { margin-left: 8px; }
.ctx { width: 133px; margin-top: 3px; background: #e8ccfc; text-align: center; line-height: 27px; color: #333; }
.wtitle { flex: 1; padding-left: 13px; line-height: 30px; color: #a0a0a0; }
.ctl { display: flex; }
.ctl span { width: 46px; display: flex; align-items: center; justify-content: center; }
.ctl svg { width: 10px; height: 10px; }
.ex-tabs { height: 24px; flex: none; display: flex; line-height: 24px; position: relative; }
.t-file { width: 56px; height: 23px; background: #0063b1; color: #fff; text-align: center; }
.t-home { width: 40px; height: 25px; background: #f5f6f7; border: 1px solid #dadbdc; border-bottom: 0; text-align: center; position: relative; z-index: 1; line-height: 22px; }
.t-a { width: 53px; text-align: center; }
.t-b { width: 54px; text-align: center; }
.t-tool { width: 135px; margin-left: 2px; text-align: center; border: 1px solid #dadbdc; border-width: 0 1px; }
.t-right { flex: 1; display: flex; align-items: center; justify-content: flex-end; gap: 9px; padding-right: 3px; }
.collapse { width: 10px; height: 6px; }
.help { width: 16px; height: 16px; border-radius: 50%; background: #0a6cc2; color: #fff; font-weight: 700; text-align: center; line-height: 16px; letter-spacing: 0; }

.ribbon { height: 98px; flex: none; background: #f5f6f7; border: 1px solid #dadbdc; border-width: 1px 0; display: flex; padding-bottom: 2px; }
.grp { margin-top: 2px; display: flex; flex-direction: column; border-right: 1px solid #dfe0e1; }
.g-clip { width: 303px; }
.g-org { width: 187px; }
.g-new { width: 83px; }
.g-open { width: 127px; }
.g-sel { width: 118px; }
.gb { flex: 1; display: flex; }
.g-clip .gb { padding-left: 8px; }
.g-org .gb { padding-left: 3px; }
.g-new .gb { padding-left: 2px; }
.g-open .gb { padding-left: 4px; }
.g-sel .gb { padding-left: 7px; }
.gl { height: 16px; text-align: center; line-height: 16px; color: #444; }
.big { display: flex; flex-direction: column; align-items: center; padding-top: 4px; line-height: 15px; text-align: center; white-space: nowrap; }
.bi { width: 34px; height: 34px; margin-bottom: 2px; }
.w60 { width: 60px; } .w46 { width: 46px; } .w50 { width: 50px; } .w44 { width: 44px; }
.w39 { width: 39px; } .w42 { width: 42px; } .w40 { width: 40px; }
.vsep { width: 1px; height: 64px; margin: 8px 4px 0 6px; background: #dfe0e1; }
.small-col { padding-top: 2px; margin-left: 6px; }
.sc2 { margin-left: 4px; }
.sc3 { margin-left: 5px; }
.sc4 { margin-left: 0; }
.sm { height: 22px; display: flex; align-items: center; gap: 4px; white-space: nowrap; }
.s14 { width: 14px; height: 16px; }
.s16 { width: 16px; height: 16px; }
.s20 { width: 20px; height: 16px; }
.dc { display: inline-block; width: 0; height: 0; border: 3.5px solid transparent; border-top: 4px solid #333; border-bottom: 0; vertical-align: 2px; }
.dcs { margin-left: 2px; }

.addr { height: 40px; flex: none; display: flex; align-items: center; padding-top: 2px; }
.nav { width: 106px; display: flex; align-items: center; padding-left: 13px; }
.n1, .n2 { width: 12px; height: 10px; }
.n2 { margin-left: 17px; }
.n3 { width: 8px; height: 6px; margin-left: 13px; }
.n4 { width: 12px; height: 14px; margin-left: 12px; }
.crumb { width: 392px; height: 30px; border: 1px solid #d9d9d9; display: flex; align-items: center; padding-left: 4px; }
.c-f { width: 14px; height: 17px; }
.c-c { width: 6px; height: 8px; margin: 0 9px 0 8px; }
.c-dd { width: 10px; height: 6px; margin-left: auto; margin-right: 9px; }
.refresh { width: 30px; height: 30px; border: 1px solid #d9d9d9; border-left: 0; display: flex; align-items: center; justify-content: center; }
.refresh svg { width: 12px; height: 12px; }
.search { width: 271px; height: 30px; margin-left: 13px; border: 1px solid #d9d9d9; display: flex; align-items: center; padding-left: 15px; color: #7f7f7f; gap: 4px; }
.search svg { width: 12px; height: 12px; margin-right: 9px; }

.files {
  flex: none; height: 600px; padding: 7px 0 0 255px; display: grid;
  grid-template-rows: repeat(28, 21px); grid-auto-flow: column; grid-template-columns: 173px 147px 158px 92px;
}
.f { display: flex; align-items: center; white-space: nowrap; overflow: hidden; line-height: 21px; }
.fi { width: 16px; height: 16px; }
.fw { width: 18px; height: 16px; margin-left: -2px; }
.fe { width: 16px; flex: none; }
.fsel { background: #d9d9d9; margin: 0 0 0 -7px; padding: 0 0 1px 7px; width: 139px; height: 22px; }
.ex-hs { height: 15px; flex: none; background: #f0f0f0; position: relative; display: flex; justify-content: flex-end; align-items: center; }
.ex-thumb { width: 17px; height: 15px; background: #cdcdcd; margin-right: 45px; }
.ex-hsr { width: 7px; height: 9px; margin-right: 4px; }
.ex-status { flex: 1; display: flex; align-items: center; justify-content: flex-end; gap: 1px; padding-right: 8px; }
.st1 { width: 18px; height: 14px; }
.st2 { width: 20px; height: 14px; }

/* task manager */
.taskmgr {
  position: absolute; left: 1px; top: 191px; width: 864px; height: 642px;
  background: #fff; border: 1px solid #0078d7; display: flex; flex-direction: column;
}
.tm-title { height: 30px; background: #0078d7; color: #fff; display: flex; align-items: center; flex: none; padding-left: 8px; }
.tm-ic { width: 17px; height: 14px; margin-right: 5px; }
.tm-name { flex: 1; opacity: .92; }
.ctl-w span { height: 30px; }
.tm-menu { height: 18px; flex: none; display: flex; gap: 16px; align-items: center; padding: 1px 0 0 7px; }
.tm-tabs { height: 27px; flex: none; background: #fff; border-top: 2px solid #f0f0f0; border-bottom: 1px solid #d9d9d9; display: flex; align-items: flex-end; padding-left: 1px; }
.tab { height: 21px; margin-bottom: -1px; background: #f0f0f0; border: 1px solid #d9d9d9; border-left: 0; text-align: center; line-height: 19px; padding-left: 2px; }
.tab.active { height: 23px; background: #fff; border-left: 1px solid #d9d9d9; border-bottom: 0; line-height: 19px; padding: 0 0 3px; }
.w63 { width: 63px; } .w33 { width: 33px; } .w52 { width: 52px; } .w84 { width: 84px; }
.w48 { width: 48px; } .w64 { width: 64px; } .w46.tab { width: 46px; }
.head {
  height: 57px; flex: none; padding: 15px 0 0 1px; border-bottom: 1px solid #a0a0a0;
  display: grid; grid-template-columns: 344px 119px repeat(5, 73px) 1fr;
}
.hc { position: relative; border-right: 1px solid #d9d9d9; display: flex; flex-direction: column; align-items: flex-end; justify-content: flex-end; padding: 0 5px 2px 5px; color: #4c607a; }
.hc b { font-weight: 400; font-size: 16px; line-height: 18px; color: #1a1a1a; margin-bottom: 3px; }
.hc em { font-style: normal; line-height: 18px; }
.hname, .hstat { align-items: flex-start; line-height: 18px; }
.hname { padding-left: 7px; }
.hlast { border-right: 0; }
.sort { position: absolute; left: 8px; top: 3px; width: 10px; height: 6px; }
.body { height: 443px; flex: none; display: flex; padding-left: 1px; }
.list { width: 844px; height: 443px; overflow: hidden; }
.rows { margin-top: -10px; }
.row { height: 28px; display: grid; grid-template-columns: 344px 119px repeat(5, 73px) 16px; align-items: stretch; }
.nm { display: flex; align-items: center; white-space: nowrap; }
.ex { width: 7px; height: 10px; margin: 0 9px 0 9px; }
span.ex { display: block; flex: none; }
.ic { width: 16px; height: 16px; margin: 0 6px 0 3px; }
.st { display: flex; align-items: center; justify-content: flex-end; padding-right: 6px; }
.leaf { width: 10px; height: 14px; }
.v { background: #fdf2c0; border-right: 1px solid #ecd9a3; text-align: right; padding-right: 5px; line-height: 28px; }
.st + .v { border-left: 1px solid #ecd9a3; }
.v.m { background: #f8e8a8; }
.v.z { background: #fdf2c0; }
.sel { background: #cce8ff; }
.sel .v { background: #d9e9ee; border-color: #dbe3dd; }
.sel .v.m { background: #d8e8ea; }
.vs { width: 17px; margin-left: 1px; background: #f0f0f0; position: relative; height: 443px; }
.vu { position: absolute; left: 3px; top: 4px; width: 10px; height: 10px; }
.vd { position: absolute; left: 3px; bottom: 4px; width: 10px; height: 10px; transform: rotate(180deg); }
.vth { position: absolute; left: 0; top: 122px; width: 15px; height: 47px; background: #cdcdcd; }
.hbar { height: 16px; flex: none; margin-left: 1px; width: 844px; background: #f0f0f0; display: flex; align-items: center; }
.hbl, .hbr { width: 17px; height: 16px; display: flex; align-items: center; justify-content: center; }
.hbl svg, .hbr svg { width: 7px; height: 9px; }
.hbl svg { transform: rotate(180deg); }
.hth { width: 556px; height: 16px; background: #cdcdcd; margin-right: auto; }
.foot { height: 49px; flex: none; border-top: 1px solid #a0a0a0; display: flex; align-items: center; padding: 0 8px; gap: 7px; }
.circ { width: 19px; height: 19px; border: 1px solid #a0a0a0; border-radius: 50%; display: flex; align-items: center; justify-content: center; }
.circ svg { width: 10px; height: 6px; }
.less { flex: 1; }
.end { width: 83px; height: 21px; background: #e1e1e1; border: 1px solid #adadad; text-align: center; line-height: 18px; white-space: nowrap; }

/* annotations */
.arrows { position: absolute; left: 0; top: 0; width: 1504px; height: 938px; filter: drop-shadow(2px 5px 3px rgba(0,0,0,.65)); z-index: 3; }
.mark { position: absolute; border: 5px solid #ed1c24; z-index: 4; }
.mk-a { left: 17px; top: 591px; width: 196px; height: 35px; }
.mk-b { left: 1030px; top: 426px; width: 149px; height: 32px; }
.mk-c { left: 1232px; top: 900px; width: 41px; height: 37px; }

/* taskbar */
.taskbar { height: 40px; flex: none; background: #1c1c1c; display: flex; color: #fff; }
.tb-app { width: 48px; margin-left: 80px; background: #3a3a3a; border-bottom: 2px solid #76b9ed; display: flex; align-items: center; justify-content: center; }
.tb-app svg { width: 22px; height: 20px; }
.tray { margin-left: auto; display: flex; align-items: center; }
.ts { width: 24px; display: flex; justify-content: center; }
.ts svg { width: 16px; height: 16px; }
.ime { font-size: 18px; line-height: 20px; font-weight: 400; }
.clock { width: 95px; padding-right: 2px; display: flex; flex-direction: column; align-items: center; line-height: 18px; letter-spacing: .2px; }
```
